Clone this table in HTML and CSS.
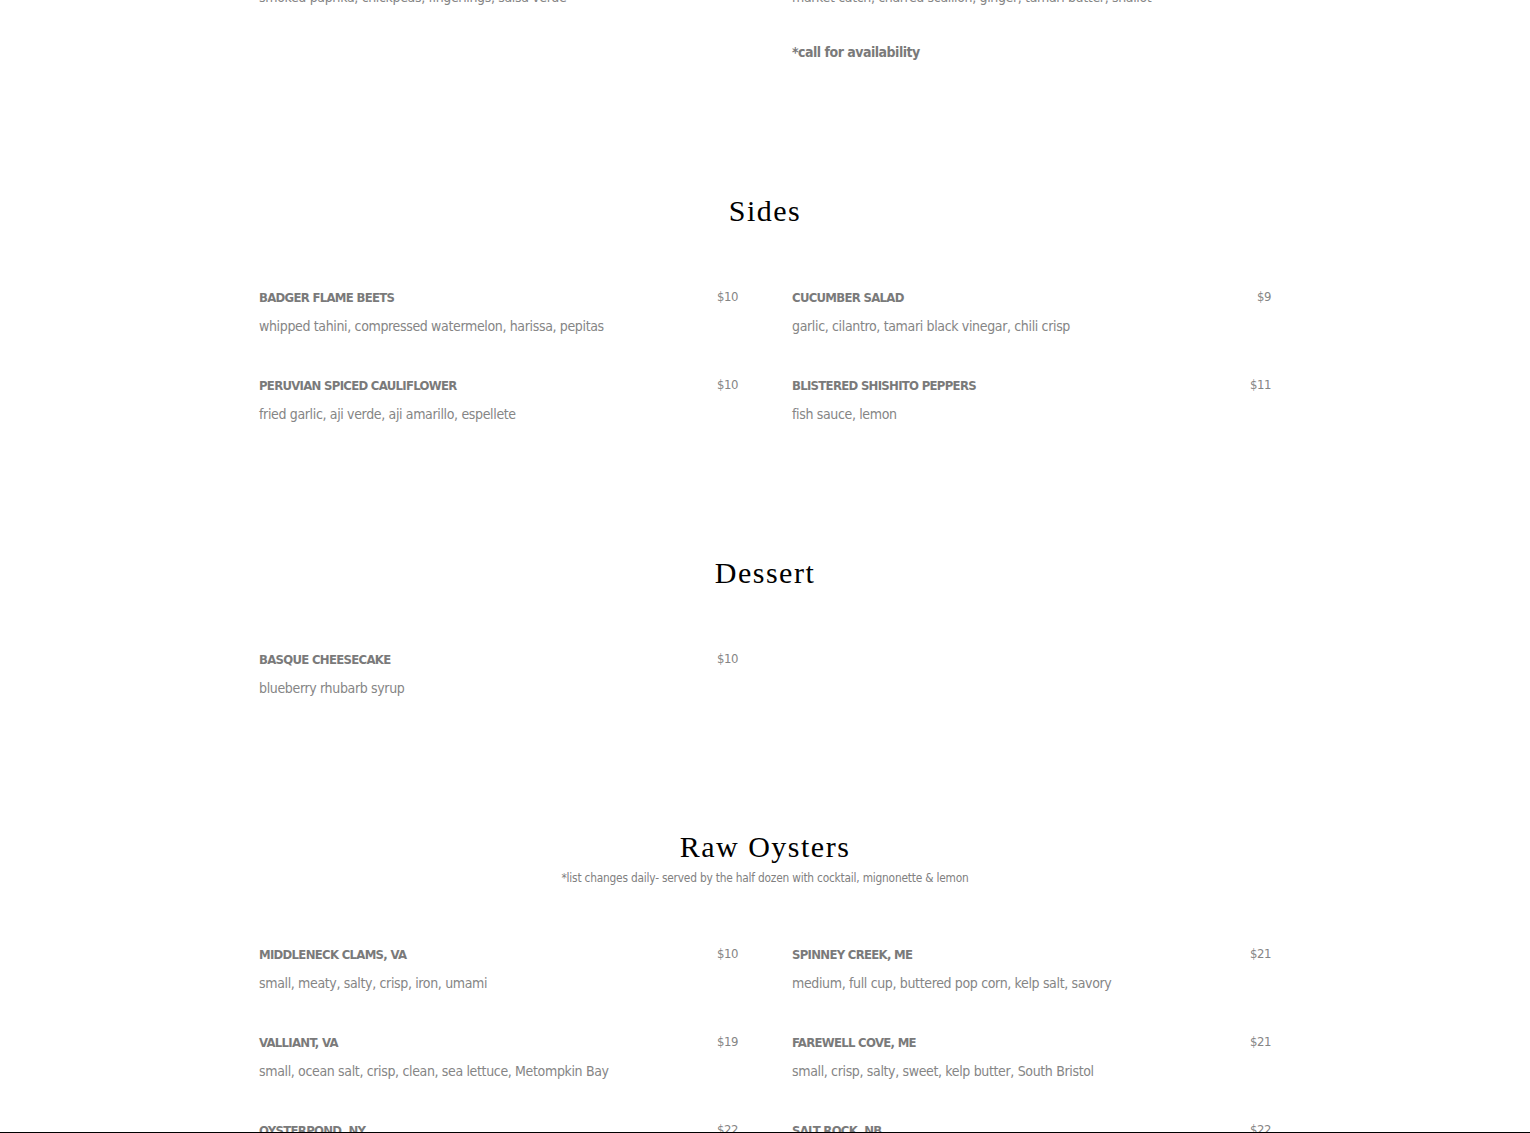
FILE: index.html
```html
<!DOCTYPE html>
<html lang="en">
<head>
<meta charset="utf-8">
<title>Menu</title>
<link rel="stylesheet" href="styles.css">
</head>
<body>
<main class="menu">
  <section class="section section-first">
    <div class="items">
      <div class="item">
        <div class="item-head"><span class="item-name">GRILLED OCTOPUS</span><span class="item-price">$18</span></div>
        <div class="item-desc">smoked paprika, chickpeas, fingerlings, salsa verde</div>
      </div>
      <div class="item">
        <div class="item-head"><span class="item-name">WHOLE ROASTED FISH</span><span class="item-price">MP</span></div>
        <div class="item-desc">market catch, charred scallion, ginger, tamari butter, shallot</div>
        <div class="item-note">*call for availability</div>
      </div>
    </div>
  </section>

  <section class="section">
    <header class="section-head">
      <h2 class="section-title">Sides</h2>
    </header>
    <div class="items">
      <div class="item">
        <div class="item-head"><span class="item-name">BADGER FLAME BEETS</span><span class="item-price">$10</span></div>
        <div class="item-desc">whipped tahini, compressed watermelon, harissa, pepitas</div>
      </div>
      <div class="item">
        <div class="item-head"><span class="item-name">CUCUMBER SALAD</span><span class="item-price">$9</span></div>
        <div class="item-desc">garlic, cilantro, tamari black vinegar, chili crisp</div>
      </div>
      <div class="item">
        <div class="item-head"><span class="item-name">PERUVIAN SPICED CAULIFLOWER</span><span class="item-price">$10</span></div>
        <div class="item-desc">fried garlic, aji verde, aji amarillo, espellete</div>
      </div>
      <div class="item">
        <div class="item-head"><span class="item-name">BLISTERED SHISHITO PEPPERS</span><span class="item-price">$11</span></div>
        <div class="item-desc">fish sauce, lemon</div>
      </div>
    </div>
  </section>

  <section class="section">
    <header class="section-head">
      <h2 class="section-title">Dessert</h2>
    </header>
    <div class="items">
      <div class="item">
        <div class="item-head"><span class="item-name">BASQUE CHEESECAKE</span><span class="item-price">$10</span></div>
        <div class="item-desc">blueberry rhubarb syrup</div>
      </div>
    </div>
  </section>

  <section class="section">
    <header class="section-head">
      <h2 class="section-title">Raw Oysters</h2>
      <p class="section-sub">*list changes daily- served by the half dozen with cocktail, mignonette &amp; lemon</p>
    </header>
    <div class="items">
      <div class="item">
        <div class="item-head"><span class="item-name">MIDDLENECK CLAMS, VA</span><span class="item-price">$10</span></div>
        <div class="item-desc">small, meaty, salty, crisp, iron, umami</div>
      </div>
      <div class="item">
        <div class="item-head"><span class="item-name">SPINNEY CREEK, ME</span><span class="item-price">$21</span></div>
        <div class="item-desc">medium, full cup, buttered pop corn, kelp salt, savory</div>
      </div>
      <div class="item">
        <div class="item-head"><span class="item-name">VALLIANT, VA</span><span class="item-price">$19</span></div>
        <div class="item-desc">small, ocean salt, crisp, clean, sea lettuce, Metompkin Bay</div>
      </div>
      <div class="item">
        <div class="item-head"><span class="item-name">FAREWELL COVE, ME</span><span class="item-price">$21</span></div>
        <div class="item-desc">small, crisp, salty, sweet, kelp butter, South Bristol</div>
      </div>
      <div class="item">
        <div class="item-head"><span class="item-name">OYSTERPOND, NY</span><span class="item-price">$22</span></div>
        <div class="item-desc">medium, briny, sweet finish, firm meat</div>
      </div>
      <div class="item">
        <div class="item-head"><span class="item-name">SALT ROCK, NB</span><span class="item-price">$22</span></div>
        <div class="item-desc">medium, deep cup, clean brine, cucumber finish</div>
      </div>
    </div>
  </section>
</main>
<div class="bottom-rule"></div>
</body>
</html>
```

FILE: styles.css
```css
html, body {
  margin: 0;
  padding: 0;
  background: #fff;
}

body {
  font-family: "DejaVu Sans Condensed", "DejaVu Sans", "Liberation Sans", sans-serif;
  font-stretch: condensed;
  color: #808080;
}

.menu {
  width: 1012px;
  margin: 0 auto;
  padding-bottom: 200px;
}

.section {
  padding-bottom: 125px;
}

.section-first {
  margin-top: -45px;
}

.section-head {
  text-align: center;
  padding-bottom: 53px;
}

.section-title {
  margin: 0;
  font-family: "Liberation Serif", serif;
  font-stretch: normal;
  font-weight: 400;
  font-size: 30px;
  line-height: 40px;
  letter-spacing: 1.5px;
  color: #000;
}

.section-sub {
  margin: 1px 0 0;
  font-size: 11.8px;
  letter-spacing: -0.2px;
  line-height: 20px;
  color: #808080;
}

.items {
  display: grid;
  grid-template-columns: 1fr 1fr;
  column-gap: 54px;
  row-gap: 32px;
}

.item-head {
  display: flex;
  justify-content: space-between;
  align-items: baseline;
  height: 28px;
  line-height: 28px;
}

.item-name {
  font-weight: 700;
  font-size: 13px;
  letter-spacing: -0.7px;
  color: #7a7a7a;
}

.item-price {
  font-size: 13px;
  letter-spacing: -0.4px;
  color: #858585;
  position: relative;
  top: -1px;
}

.item-desc {
  font-size: 14px;
  letter-spacing: -0.35px;
  line-height: 28px;
  white-space: nowrap;
  color: #858585;
}

.item-note {
  margin-top: 27px;
  font-weight: 700;
  font-size: 14px;
  letter-spacing: -0.5px;
  line-height: 28px;
  color: #7a7a7a;
}

.bottom-rule {
  position: fixed;
  left: 0;
  right: 0;
  bottom: 0;
  height: 1px;
  background: #000;
}
```
